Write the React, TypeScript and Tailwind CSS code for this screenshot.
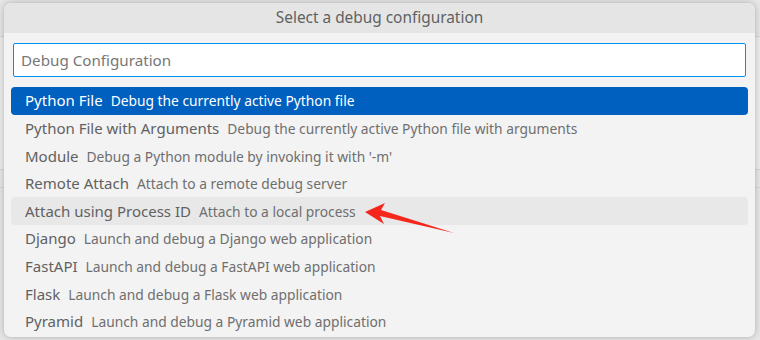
import React from 'react';

const items = [
  { label: 'Python File', desc: 'Debug the currently active Python file' },
  { label: 'Python File with Arguments', desc: 'Debug the currently active Python file with arguments' },
  { label: 'Module', desc: "Debug a Python module by invoking it with '-m'" },
  { label: 'Remote Attach', desc: 'Attach to a remote debug server' },
  { label: 'Attach using Process ID', desc: 'Attach to a local process' },
  { label: 'Django', desc: 'Launch and debug a Django web application' },
  { label: 'FastAPI', desc: 'Launch and debug a FastAPI web application' },
  { label: 'Flask', desc: 'Launch and debug a Flask web application' },
  { label: 'Pyramid', desc: 'Launch and debug a Pyramid web application' },
];

function Arrow() {
  return (
    <svg className="absolute left-0 top-0 pointer-events-none" width="760" height="340">
      <polygon points="365,212 385,203 381,210 454,233 380,216 384,224" fill="#f5261c" />
    </svg>
  );
}

export default function App() {
  return (
    <div className="relative w-[760px] h-[340px] overflow-hidden bg-[#e6e6e6] font-['Noto_Sans',sans-serif]">
      {/* editor behind the picker */}
      <div className="absolute inset-0 flex flex-col">
        <div className="h-[37px] border-b border-[#d6d6d6]" />
        <div className="h-[133px] border-b border-[#d6d6d6] bg-[#ececec]" />
        <div className="h-[18px] border-b border-[#d6d6d6]" />
      </div>
      <div className="relative pl-[4px] pt-[3px]">
        <div className="w-[751px] h-[334px] rounded-[7px] bg-[#f3f3f3] shadow-[0_0_6px_rgba(0,0,0,0.25)] overflow-hidden flex flex-col">
          <div className="h-[30px] bg-[#e5e5e5] flex items-center justify-center text-[15.4px] text-[#616161]">
            Select a debug configuration
          </div>
          <div className="px-[9px] pt-[10px] pb-[10px]">
            <div className="h-[34px] bg-white border border-[#0090f1] rounded-[2px] flex items-center px-[7px] text-[15.2px] text-[#777777]">
              Debug Configuration
            </div>
          </div>
          <div className="px-[7px] flex flex-col">
            {items.map((it, i) => (
              <div
                key={it.label}
                className={
                  'h-[27.6px] shrink-0 rounded-[4px] flex items-center pl-[14px] whitespace-nowrap ' +
                  (i === 0 ? 'bg-[#0060c0] text-white' : i === 4 ? 'bg-[#e8e8e8] text-[#616161]' : 'text-[#616161]')
                }
              >
                <div className="flex items-baseline">
                  <span className="text-[15px]">{it.label}</span>
                  <span className={'ml-[8px] text-[13.8px] ' + (i === 0 ? 'text-white' : 'text-[#6f6f6f]')}>{it.desc}</span>
                </div>
              </div>
            ))}
          </div>
        </div>
      </div>
      <Arrow />
    </div>
  );
}
